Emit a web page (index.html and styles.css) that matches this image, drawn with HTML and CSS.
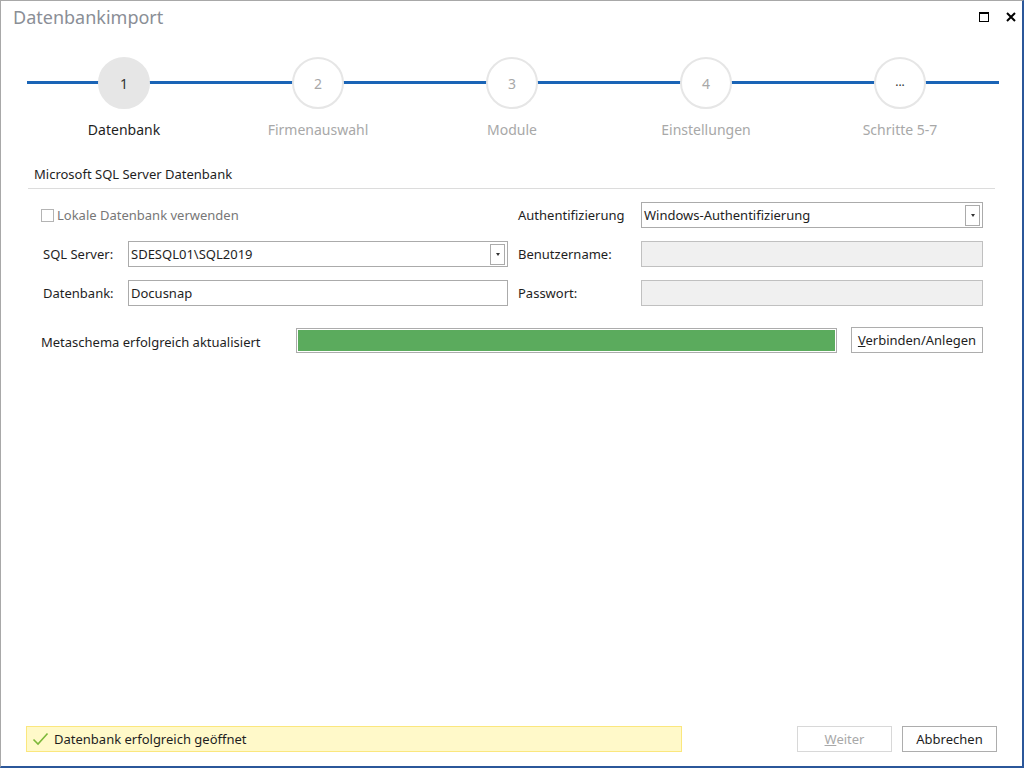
FILE: index.html
```html
<!DOCTYPE html>
<html lang="de">
<head>
<meta charset="utf-8">
<title>Datenbankimport</title>
<link rel="stylesheet" href="styles.css">
</head>
<body>
<div class="window">
  <div class="titlebar">
    <div class="title">Datenbankimport</div>
    <div class="winbtns">
      <svg class="wbtn" width="12" height="12" viewBox="0 0 12 12"><rect x="1.5" y="1.5" width="9" height="9" fill="none" stroke="#000" stroke-width="1"/><rect x="1" y="1" width="10" height="2" fill="#000"/></svg>
      <svg class="wbtn" width="12" height="12" viewBox="0 0 12 12"><path d="M2 2 L10 10 M10 2 L2 10" stroke="#000" stroke-width="2"/></svg>
    </div>
  </div>

  <div class="stepper">
    <div class="step active"><div class="circle">1</div><div class="slabel">Datenbank</div></div>
    <div class="step"><div class="circle">2</div><div class="slabel">Firmenauswahl</div></div>
    <div class="step"><div class="circle">3</div><div class="slabel">Module</div></div>
    <div class="step"><div class="circle">4</div><div class="slabel">Einstellungen</div></div>
    <div class="step"><div class="circle dots">...</div><div class="slabel">Schritte 5-7</div></div>
  </div>

  <div class="section">Microsoft SQL Server Datenbank</div>

  <div class="form">
    <label class="check"><span class="box"></span>Lokale Datenbank verwenden</label>
    <div class="lbl rlbl">Authentifizierung</div>
    <div class="field combo"><span>Windows-Authentifizierung</span><span class="ddbtn"><span class="arrow"></span></span></div>

    <div class="lbl">SQL Server:</div>
    <div class="field combo"><span>SDESQL01\SQL2019</span><span class="ddbtn"><span class="arrow"></span></span></div>
    <div class="lbl rlbl">Benutzername:</div>
    <div class="field disabled"></div>

    <div class="lbl">Datenbank:</div>
    <div class="field"><span>Docusnap</span></div>
    <div class="lbl rlbl">Passwort:</div>
    <div class="field disabled"></div>
  </div>

  <div class="progressrow">
    <div class="plabel">Metaschema erfolgreich aktualisiert</div>
    <div class="progress"><div class="pfill" style="width:100%"></div></div>
    <button class="btn connect"><u>V</u>erbinden/Anlegen</button>
  </div>

  <div class="spacer"></div>

  <div class="footer">
    <div class="status">
      <svg width="17" height="14" viewBox="0 0 17 14"><path d="M1.5 7.5 L6 12 L15.5 1.5" fill="none" stroke="#7db83a" stroke-width="1.6"/></svg>
      <span>Datenbank erfolgreich geöffnet</span>
    </div>
    <button class="btn fbtn disabledbtn"><u>W</u>eiter</button>
    <button class="btn fbtn">Abbrechen</button>
  </div>
</div>
</body>
</html>
```

FILE: styles.css
```css
* { box-sizing: border-box; }
html, body { margin: 0; padding: 0; }
body {
  width: 1024px;
  height: 768px;
  font-family: "Noto Sans", "Open Sans", sans-serif;
  font-size: 12px;
  color: #1e1e1e;
  background: #fff;
}
.window {
  width: 1024px;
  height: 768px;
  border-left: 1px solid #a8a8a8;
  border-top: 1px solid #a8a8a8;
  border-right: 2px solid #2b579a;
  border-bottom: 2px solid #2b579a;
  display: flex;
  flex-direction: column;
}
.titlebar {
  height: 33px;
  display: flex;
  align-items: flex-start;
  justify-content: space-between;
  padding: 4px 5px 0 12px;
}
.title {
  font-size: 18px;
  color: #8a8e96;
  line-height: 24px;
}
.winbtns {
  display: flex;
  gap: 15px;
  padding-top: 6px;
}
.wbtn { display: block; }

.stepper {
  position: relative;
  display: flex;
  margin: 23px 0 0 26px;
  width: 970px;
}
.stepper::before {
  content: "";
  position: absolute;
  left: 0;
  right: -2px;
  top: 24px;
  height: 3px;
  background: #1a64b6;
}
.step {
  position: relative;
  width: 194px;
  display: flex;
  flex-direction: column;
  align-items: center;
}
.circle {
  width: 52px;
  height: 52px;
  border-radius: 50%;
  border: 2px solid #e6e6e6;
  background: #fff;
  color: #a8a8a8;
  font-size: 14px;
  display: flex;
  align-items: center;
  justify-content: center;
}
.circle.dots { color: #333; font-size: 12px; padding-bottom: 4px; }
.step.active .circle { background: #e6e6e6; color: #333; }
.slabel {
  margin-top: 11px;
  font-size: 14px;
  color: #a8a8a8;
  line-height: 20px;
}
.step.active .slabel { color: #1e1e1e; }

.section {
  margin: 24px 27px 0 27px;
  padding: 0 0 4px 6px;
  border-bottom: 1px solid #dcdcdc;
  font-size: 13px;
  line-height: 20px;
}

.form {
  display: grid;
  grid-template-columns: 85px 380px 133px 342px;
  grid-auto-rows: 26px;
  row-gap: 13px;
  margin: 13px 0 0 42px;
  align-items: center;
}
.check {
  grid-column: 1 / span 2;
  display: flex;
  align-items: center;
  color: #777;
  font-size: 13px;
  margin-left: -2px;
}
.box {
  width: 13px;
  height: 13px;
  border: 1px solid #b4b4b4;
  margin-right: 3px;
}
.lbl { font-size: 13px; }
.rlbl { padding-left: 10px; }
.field {
  height: 26px;
  border: 1px solid #ababab;
  display: flex;
  align-items: center;
  padding: 0 2px;
  font-size: 13px;
  position: relative;
}
.combo { justify-content: space-between; }
.field.disabled { background: #f0f0f0; border-color: #c0c0c0; }
.ddbtn {
  width: 15px;
  height: 21px;
  border: 1px solid #ababab;
  display: flex;
  align-items: center;
  justify-content: center;
  margin-right: 0;
}
.arrow {
  width: 0; height: 0;
  border-left: 2.5px solid transparent;
  border-right: 2.5px solid transparent;
  border-top: 3px solid #333;
}

.progressrow {
  display: flex;
  align-items: center;
  margin: 20px 0 0 40px;
}
.plabel { width: 255px; font-size: 13px; padding-top: 4px; }
.progress {
  width: 541px;
  height: 25px;
  border: 1px solid #acacac;
  padding: 1px;
  margin-top: 2px;
}
.pfill { height: 100%; background: #5bab5d; }
.btn {
  font-family: inherit;
  font-size: 13px;
  background: #fff;
  border: 1px solid #adadad;
  color: #1e1e1e;
  height: 26px;
  padding: 0;
}
.btn u { text-decoration: underline; }
.connect { width: 132px; margin-left: 14px; }

.spacer { flex: 1; }

.footer {
  display: flex;
  align-items: center;
  margin: 0 0 14px 25px;
}
.status {
  width: 656px;
  height: 26px;
  background: #fff9c9;
  border: 1px solid #fbe77e;
  display: flex;
  align-items: center;
  padding-left: 5px;
  gap: 5px;
  font-size: 13px;
}
.status svg { display: block; }
.fbtn { width: 95px; }
.disabledbtn { margin-left: 115px; color: #a8a8a8; border-color: #d8d8d8; }
.fbtn + .fbtn { margin-left: 10px; }
```
